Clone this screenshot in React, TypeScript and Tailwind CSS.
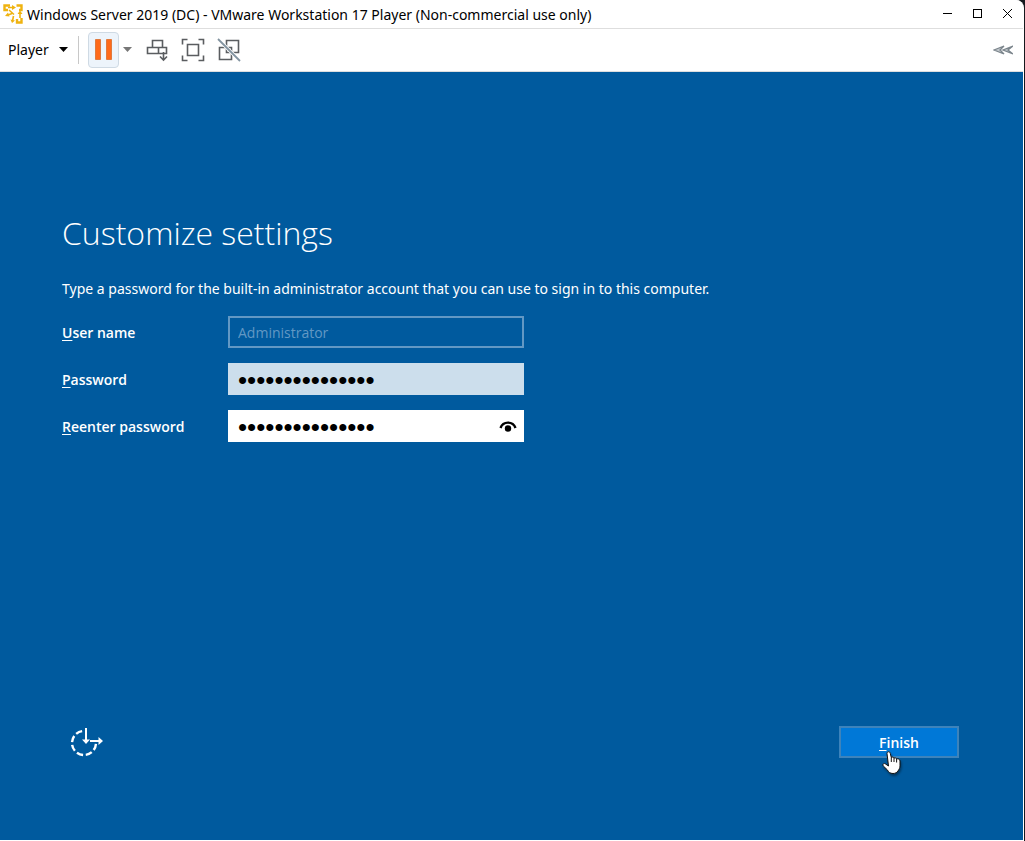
import { useState } from "react";

function AppLogo() {
  return (
    <svg viewBox="0 0 20 20" className="size-5" fill="none" stroke="#efb310" aria-hidden="true">
      <path d="M7 1.500H1.500V6H5" strokeWidth="2.400" />
      <path d="M13.500 1.500h5V6H16" strokeWidth="2.400" />
      <path d="M18.500 14v4.500H14V15" strokeWidth="2.400" />
      <path d="M5 3.500h5M17 8v6M6 6l5 4.500M5 11l4-1.500M9.500 17l1-5" strokeWidth="1.600" />
      <path d="M2 12l3-3.500 1.500 4zM7.500 15.500l4.500 1-3 2.500zM9 1l4 2.500L9 6zM14.500 10l2.500-3.500 2.500 3.500z" fill="#efb310" stroke="none" />
    </svg>
  );
}

function TitleBar() {
  return (
    <header className="flex h-7 items-center justify-between bg-white pl-[3px]">
      <div className="flex items-center gap-1">
        <AppLogo />
        <h1 className="pt-px font-['Noto_Sans',sans-serif] text-sm leading-5 whitespace-nowrap text-black">
          Windows Server 2019 (DC) - VMware Workstation 17 Player (Non-commercial use only)
        </h1>
      </div>
      <div className="flex">
        <button aria-label="Minimize" className="flex h-7 w-[30px] items-center justify-center">
          <svg viewBox="0 0 10 10" className="size-2.5" stroke="#000" shapeRendering="crispEdges"><path d="M0 4.500h9" /></svg>
        </button>
        <button aria-label="Maximize" className="flex h-7 w-[30px] items-center justify-center">
          <svg viewBox="0 0 10 10" className="size-2.5" fill="none" stroke="#000" shapeRendering="crispEdges"><path d="M.5.500h8v8h-8z" /></svg>
        </button>
        <button aria-label="Close" className="flex h-7 w-[30px] items-center justify-center">
          <svg viewBox="0 0 10 10" className="size-2.5" stroke="#000"><path d="M0 0l9 9M9 0L0 9" /></svg>
        </button>
      </div>
    </header>
  );
}

function Toolbar() {
  return (
    <nav className="flex h-11 items-center border-y border-[#dedede] bg-white pr-2 pb-px pl-2">
      <button className="flex items-center gap-2.5 font-['Noto_Sans',sans-serif] text-sm leading-5 text-black">
        Player
        <svg viewBox="0 0 9 5" className="h-[5px] w-[9px]" aria-hidden="true"><path d="M0 0h9L4.500 5z" /></svg>
      </button>
      <span className="ml-2.5 h-7 w-px bg-[#c8c8c8]" />
      <button aria-label="Suspend" className="ml-[9px] flex h-9 w-[31px] items-center justify-center rounded border border-[#cfdae4] bg-[#edf4fb]">
        <svg viewBox="0 0 17 21" className="h-[21px] w-[17px]" fill="#ff6a1a" stroke="#e07a3e" strokeWidth="1"><path d="M.5.500h5v20h-5zM11.500.500h5v20h-5z" /></svg>
      </button>
      <button aria-label="Power options" className="ml-1 flex h-9 w-[10px] items-center justify-center">
        <svg viewBox="0 0 9 5" className="h-[5px] w-[9px]" fill="#777"><path d="M0 0h9L4.500 5z" /></svg>
      </button>
      <button aria-label="Send Ctrl+Alt+Del" className="ml-3 flex size-6 items-center justify-center">
        <svg viewBox="0 0 24 24" className="size-6" fill="none" stroke="#5a5d60" strokeWidth="1.600">
          <path d="M7.500 2.500h10v7h-10zM2.500 9.500h11v6h-11zM13.500 15.500v-6h8v6z" />
          <path d="M18.500 14v8M15 18.500l3.500 3.500 3.500-3.500" />
        </svg>
      </button>
      <button aria-label="Full screen" className="ml-3 flex size-6 items-center justify-center">
        <svg viewBox="0 0 24 24" className="size-6" fill="none" stroke="#5a5d60" strokeWidth="1.600">
          <path d="M1.500 6.500v-5h5M17.500 1.500h5v5M22.500 17.500v5h-5M6.500 22.500h-5v-5M6.500 6.500h11v11h-11z" />
        </svg>
      </button>
      <button aria-label="Unity" className="ml-3 flex size-6 items-center justify-center">
        <svg viewBox="0 0 24 24" className="size-6" fill="none" stroke="#5a5d60" strokeWidth="1.600">
          <path d="M9.500 2.500h12v12h-12zM2.500 9.500h12v12h-12z" />
          <path d="M1 1l22 22" stroke="#fff" strokeWidth="3.500" />
          <path d="M1 1l22 22" stroke="#8293a0" strokeWidth="1.800" />
        </svg>
      </button>
      <button aria-label="Collapse toolbar" className="ml-auto flex h-6 w-6 items-center justify-center">
        <svg viewBox="0 0 20 10" className="h-2.5 w-5" fill="#c3c9cd" stroke="#7b858c" strokeWidth="1.300"><path d="M11 1L1 5l10 4-4-4zM20 1l-10 4 10 4-5-4z" /></svg>
      </button>
    </nav>
  );
}

function EaseOfAccess() {
  return (
    <svg viewBox="0 0 34 32" className="h-8 w-[34px]" fill="none" stroke="#fff" strokeWidth="2" aria-hidden="true">
      <mask id="ring"><path d="M0 0h14v17h18v15H0z" fill="#fff" stroke="none" /></mask>
      <circle cx="14" cy="17" r="12" strokeWidth="2.400" strokeDasharray="6.600 2.800" strokeDashoffset="-1" pathLength="75.400" mask="url(#ring)" />
      <path d="M16 2v13M20 15h10" />
      <path d="M12 13.500h8L16 18zM28.500 11v8l4.500-4z" fill="#fff" stroke="none" />
    </svg>
  );
}

function HandCursor() {
  return (
    <svg viewBox="0 0 20 26" className="pointer-events-none absolute top-6 left-[43px] h-[26px] w-5 drop-shadow-[1px_2px_1px_rgba(0,0,0,0.4)]" aria-hidden="true">
      <path d="M5 3.500c0-2.300 3-2.300 3.300 0l1 4c1-.8 2.500-.3 2.700.6 1-.6 2.400-.1 2.600.8 1.400-.5 3.400.4 3.400 2v5c0 2-1 3.500-2 5-.8 1.400-2.500 2.600-5 2.600-3 0-4.700-1.600-5.600-3.600l-4-3.800c-1.400-1.700.4-3.300 2-2.200L6.500 16z" fill="#fff" stroke="#111" strokeWidth="1" />
      <path d="M9.300 7.500v4.500M12 8v4M14.600 9v3.500" stroke="#111" fill="none" />
    </svg>
  );
}

const passwordText = "min-w-0 flex-1 bg-transparent px-2.5 pt-0.5 font-['Liberation_Sans',sans-serif] text-[26px] text-black outline-none";

export default function App() {
  const [password, setPassword] = useState("Administrator#1");
  const [again, setAgain] = useState("Administrator#1");
  const [visible, setVisible] = useState(false);
  return (
    <div className="flex min-h-screen flex-col bg-[#15191e] pr-px font-['Open_Sans','Noto_Sans',sans-serif]">
      <div className="flex flex-1 flex-col overflow-hidden rounded-tr-lg border-r border-b border-white bg-white">
        <TitleBar />
        <Toolbar />
        <main className="flex flex-1 flex-col justify-between bg-[#005a9e] pt-[136px] pr-16 pb-[82px] pl-[62px] text-white">
          <form id="settings">
            <h2 className="text-[32px] leading-[50px] font-light">Customize settings</h2>
            <p className="mt-[21px] font-['Noto_Sans',sans-serif] text-sm leading-5">
              Type a password for the built-in administrator account that you can use to sign in to this computer.
            </p>
            <div className="mt-[17px] grid grid-cols-[166px_296px] items-center gap-y-[15px] text-sm leading-5">
              <label htmlFor="user" className="pt-0.5 font-semibold"><u className="underline-offset-2">U</u>ser name</label>
              <input id="user" disabled value="Administrator" className="h-8 border-2 border-[#6298c4] bg-transparent px-2 text-[#6298c4]" />
              <label htmlFor="password" className="pt-0.5 font-semibold"><u className="underline-offset-2">P</u>assword</label>
              <div className="flex h-8 bg-[#ccdeec]">
                <input id="password" type="password" value={password} onChange={(e) => setPassword(e.target.value)} className={passwordText} />
              </div>
              <label htmlFor="again" className="pt-0.5 font-semibold"><u className="underline-offset-2">R</u>eenter password</label>
              <div className="flex h-8 bg-white">
                <input id="again" type={visible ? "text" : "password"} value={again} onChange={(e) => setAgain(e.target.value)} className={passwordText} />
                <button type="button" aria-label="Show password" onClick={() => setVisible(!visible)} className="flex size-8 items-center justify-center">
                  <svg viewBox="0 0 18 12" className="h-3 w-[18px]" fill="none" stroke="#000"><path d="M1.500 8C4 .8 14 .8 16.500 8" strokeWidth="2.400" /><circle cx="9" cy="8.500" r="3.200" fill="#000" stroke="none" /></svg>
                </button>
              </div>
            </div>
          </form>
          <footer className="flex items-center justify-between">
            <button aria-label="Ease of access" className="ml-2"><EaseOfAccess /></button>
            <div className="relative">
              <button form="settings" type="button" className="block h-8 w-[120px] border-2 border-[#3d83bb] bg-[#0078d7] pt-0.5 text-sm leading-5 font-semibold"><u className="underline-offset-2">F</u>inish</button>
              <HandCursor />
            </div>
          </footer>
        </main>
      </div>
    </div>
  );
}
